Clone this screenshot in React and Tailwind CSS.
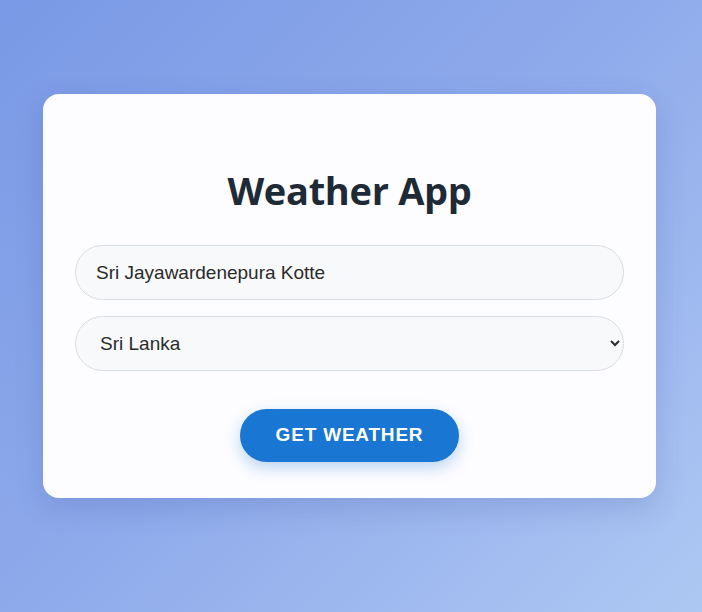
export default function App() {
  return (
    <div className="min-h-screen w-full bg-[linear-gradient(135deg,#7a99e6_0%,#8fabeb_50%,#aec8f3_100%)] flex items-start px-[43px] pt-[94px]">
      <div className="w-[613px] h-[404px] rounded-2xl bg-[#fdfdff] shadow-[0_10px_30px_rgba(40,60,140,0.18)] px-8 pt-[66px] flex flex-col">
        <h1 className="text-center text-[38px] leading-[60px] font-bold text-[#1f2a37] font-['Open_Sans','Noto_Sans',sans-serif] tracking-[-0.3px]">
          Weather App
        </h1>
        <input
          type="text"
          defaultValue="Sri Jayawardenepura Kotte"
          className="mt-[25px] h-[55px] w-full rounded-full border border-[#dadce4] bg-[#f8f9fa] px-5 text-[19px] text-[#2b2b2b] font-['Liberation_Sans',Arial,sans-serif] outline-none"
        />
        <select
          defaultValue="LK"
          className="mt-4 h-[55px] w-full rounded-full border border-[#dadce4] bg-[#f8f9fa] px-5 text-[19px] text-[#2b2b2b] font-['Liberation_Sans',Arial,sans-serif] outline-none"
        >
          <option value="LK">Sri Lanka</option>
          <option value="IN">India</option>
        </select>
        <div className="mt-[38px] flex justify-center">
          <button className="h-[53px] w-[219px] rounded-full bg-[#1976d2] text-white text-[19px] font-bold tracking-[0.8px] font-['Liberation_Sans',Arial,sans-serif] shadow-[0_6px_16px_rgba(25,118,210,0.3)]">
            GET WEATHER
          </button>
        </div>
      </div>
    </div>
  )
}
